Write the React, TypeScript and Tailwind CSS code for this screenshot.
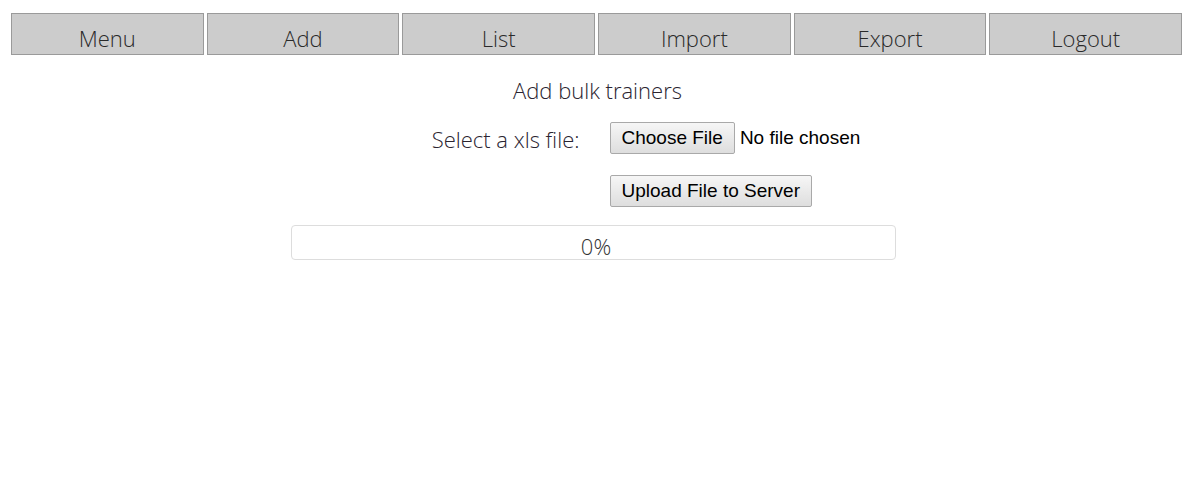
import { useState } from "react"

const tabs = ["Menu", "Add", "List", "Import", "Export", "Logout"]

const segoe = "font-['Open_Sans',sans-serif] font-light"
const arial = "font-['Liberation_Sans',Arial,sans-serif]"

export default function App() {
  const [progress] = useState(0)

  return (
    <div className={`min-h-[495px] w-full bg-white text-[#2a2430] ${segoe}`}>
      {/* Top nav */}
      <nav className="flex gap-[3px] pl-[11px] pr-[13px] pt-[13px]">
        {tabs.map((t) => (
          <button
            key={t}
            className="flex h-[42px] flex-1 items-end justify-center border border-[#9a9a9a] bg-[#cccccc] pb-[1px] text-[22px] leading-[30px] text-[#2a2a2a]"
          >
            {t}
          </button>
        ))}
      </nav>

      <h1 className="mt-[20px] text-center text-[22px] leading-[30px]">Add bulk trainers</h1>

      {/* Upload form */}
      <div className="mt-[17px] grid grid-cols-2 items-center">
        <label className="pr-[18px] pt-[2px] text-right text-[22px] leading-[30px]">Select a xls file:</label>
        <div className="flex items-center pl-[12px]">
          <button
            className={`h-[32px] rounded-[2px] border border-[#a9a9a9] bg-gradient-to-b from-[#f6f6f6] to-[#dedede] px-[11px] text-[19px] text-black ${arial}`}
          >
            Choose File
          </button>
          <span className={`ml-[5px] text-[19px] text-black ${arial}`}>No file chosen</span>
        </div>

        <div />
        <div className="mt-[21px] pl-[12px]">
          <button
            className={`h-[32px] rounded-[2px] border border-[#a9a9a9] bg-gradient-to-b from-[#f6f6f6] to-[#dedede] px-[11px] text-[19px] text-black ${arial}`}
          >
            Upload File to Server
          </button>
        </div>
      </div>

      {/* Progress */}
      <div className="mx-auto mt-[18px] flex h-[35px] w-[605px] translate-x-[-4px] items-end justify-center rounded-[4px] border border-[#dddddd]">
        <span className="ml-[5px] text-[22px] leading-[26px] text-[#333]">{progress}%</span>
      </div>
    </div>
  )
}
